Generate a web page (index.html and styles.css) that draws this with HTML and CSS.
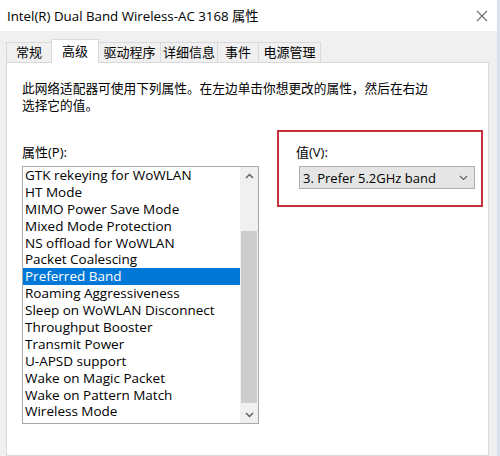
FILE: index.html
```html
<!DOCTYPE html>
<html lang="zh-CN">
<head>
<meta charset="utf-8">
<title>属性</title>
<link rel="stylesheet" href="styles.css">
</head>
<body>
<div class="window">
  <div class="titlebar">
    <span class="title">Intel(R) Dual Band Wireless-AC 3168 属性</span>
    <svg class="close" width="12" height="12" viewBox="0 0 12 12"><path d="M1 1L11 11M11 1L1 11" stroke="#6f6f6f" stroke-width="1.1" fill="none"/></svg>
  </div>
  <div class="tabs">
    <div class="tab t46">常规</div>
    <div class="tab active">高级</div>
    <div class="tab t63">驱动程序</div>
    <div class="tab t58">详细信息</div>
    <div class="tab t42">事件</div>
    <div class="tab t63">电源管理</div>
  </div>
  <div class="panel">
    <p class="desc">此网络适配器可使用下列属性。在左边单击你想更改的属性，然后在右边<br>选择它的值。</p>
    <div class="columns">
      <div class="propcol">
        <div class="label">属性(P):</div>
        <div class="listbox">
          <ul class="items">
            <li>GTK rekeying for WoWLAN</li>
            <li>HT Mode</li>
            <li>MIMO Power Save Mode</li>
            <li>Mixed Mode Protection</li>
            <li>NS offload for WoWLAN</li>
            <li>Packet Coalescing</li>
            <li class="sel">Preferred Band</li>
            <li>Roaming Aggressiveness</li>
            <li>Sleep on WoWLAN Disconnect</li>
            <li>Throughput Booster</li>
            <li>Transmit Power</li>
            <li>U-APSD support</li>
            <li>Wake on Magic Packet</li>
            <li>Wake on Pattern Match</li>
            <li>Wireless Mode</li>
          </ul>
          <div class="scrollbar">
            <div class="sbtn"><svg width="9" height="6" viewBox="0 0 9 6"><path d="M1 5L4.5 1.5L8 5" stroke="#606060" stroke-width="1.5" fill="none"/></svg></div>
            <div class="track">
              <div class="thumb"></div>
            </div>
            <div class="sbtn"><svg width="9" height="6" viewBox="0 0 9 6"><path d="M1 1L4.5 4.5L8 1" stroke="#606060" stroke-width="1.5" fill="none"/></svg></div>
          </div>
        </div>
      </div>
      <div class="valuebox">
        <div class="label">值(V):</div>
        <div class="combo">
          <span>3. Prefer 5.2GHz band</span>
          <svg width="9" height="6" viewBox="0 0 9 6"><path d="M1 1L4.5 4.5L8 1" stroke="#606060" stroke-width="1.1" fill="none"/></svg>
        </div>
      </div>
    </div>
  </div>
</div>
</body>
</html>
```

FILE: styles.css
```css
html, body {
  margin: 0;
  padding: 0;
}
body {
  width: 500px;
  height: 456px;
  overflow: hidden;
  background: #f0f0f0;
  font-family: "Open Sans", "Noto Sans CJK SC", sans-serif;
  color: #000;
}
.window {
  width: 497px;
  height: 456px;
  border-right: 3px solid #d6e2ee;
  display: flex;
  flex-direction: column;
  background: #f0f0f0;
}
.titlebar {
  height: 31px;
  flex: none;
  background: #fff;
  display: flex;
  align-items: center;
  justify-content: space-between;
  padding: 0 9px 0 7px;
}
.title {
  font-size: 13.3px;
}
.close {
  display: block;
}
.tabs {
  display: flex;
  align-items: flex-end;
  padding-left: 6px;
  margin-top: 8px;
  height: 23px;
  flex: none;
  position: relative;
  z-index: 1;
}
.tab {
  box-sizing: border-box;
  height: 20px;
  border: 1px solid #d9d9d9;
  border-bottom: none;
  margin-right: -1px;
  background: #f0f0f0;
  font-size: 13px;
  line-height: 19px;
  text-align: center;
  color: #000;
}
.t46 { width: 46px; }
.t63 { width: 63px; }
.t58 { width: 58px; }
.t42 { width: 42px; }
.tab.active {
  width: 48px;
  height: 24px;
  margin-bottom: -1px;
  background: #fff;
  line-height: 22px;
  position: relative;
}
.panel {
  flex: 1;
  margin: 0 8px 0 6px;
  background: #fff;
  border: 1px solid #d9d9d9;
  padding: 0 5px 0 15px;
}
.desc {
  margin: 0;
  padding-top: 17px;
  font-size: 12.7px;
  line-height: 17px;
}
.columns {
  display: flex;
  gap: 18px;
  margin-top: 16px;
  align-items: flex-start;
}
.propcol {
  flex: none;
  width: 237px;
  padding-top: 14px;
}
.label {
  font-size: 13px;
  line-height: 17px;
}
.listbox {
  margin-top: 5px;
  height: 256px;
  border: 1px solid #a9a9a9;
  display: flex;
}
.items {
  list-style: none;
  margin: 0;
  padding: 0;
  flex: 1;
  font-size: 13.5px;
}
.items li {
  height: 16.9px;
  line-height: 16.9px;
  padding-left: 2px;
  white-space: nowrap;
}
.items li.sel {
  background: #0078d7;
  color: #fff;
}
.scrollbar {
  width: 18px;
  background: #f0f0f0;
  display: flex;
  flex-direction: column;
}
.sbtn {
  height: 17px;
  display: flex;
  align-items: center;
  justify-content: center;
}
.track {
  flex: 1;
  padding: 47px 1px 0 1px;
}
.thumb {
  height: 172px;
  background: #cdcdcd;
}
.valuebox {
  flex: none;
  box-sizing: border-box;
  width: 206px;
  height: 77px;
  border: 2px solid #c4323c;
  padding: 12px 0 0 17px;
}
.combo {
  box-sizing: border-box;
  margin-top: 5px;
  margin-left: 3px;
  width: 176px;
  height: 23px;
  background: #e5e5e5;
  border: 1px solid #adadad;
  display: flex;
  align-items: center;
  justify-content: space-between;
  padding: 0 6px 0 3px;
  font-size: 13px;
}
.combo svg {
  display: block;
}
```
